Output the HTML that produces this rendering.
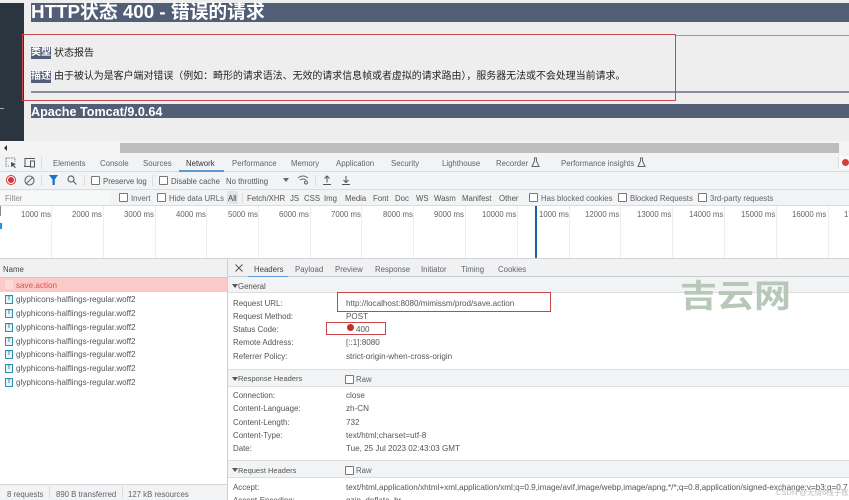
<!DOCTYPE html>
<html lang="zh-CN"><head><meta charset="utf-8"><title>HTTP状态 400</title>
<style>
html,body{margin:0;padding:0;background:#fff}
#p{position:relative;width:849px;height:500px;overflow:hidden;background:#fff;font:8.2px "Liberation Sans","Noto Sans CJK SC",sans-serif;color:#555;filter:blur(.35px)}
#p div,#p span.a{position:absolute;white-space:nowrap}
.r{background:#f1f3f4}
.t{line-height:12px;color:#606368;font-size:7.8px;margin-top:1px}
.k{line-height:12px;color:#555;left:233px;font-size:7.9px;margin-top:1px}
.v{line-height:12px;color:#555;left:346px;font-size:8.1px;margin-top:1px}
.cb{width:7px;height:7px;border:1px solid #777;border-radius:1px;background:#fff}
.f{left:16px;line-height:12px;color:#555;font-size:8.1px;margin-top:1px}
.ic{left:5px;width:6px;height:7px;border:1px solid #2b8fb0;background:#e8f4f8;color:#2b8fb0;font-size:6px;line-height:7px;text-align:center;font-weight:bold;margin-top:1px}
.rb{border:1.5px solid #c8454c;box-sizing:border-box}
.ln{background:#dcdcdc}
.h{font-size:7.5px!important}
</style></head><body><div id="p">
<!-- page area -->
<div style="left:0;top:0;width:849px;height:143px;background:#eeeeee"></div>
<div style="left:0;top:3px;width:24px;height:138px;background:#2b3540"></div>
<div style="left:0;top:108px;width:4px;height:1px;background:#aaa"></div>
<div style="left:31px;top:3px;width:818px;height:19px;background:#525d76"></div>
<div style="left:31px;top:0;line-height:23px;font-size:18.8px;font-weight:bold;color:#fff">HTTP状态 400 - 错误的请求</div>
<div style="left:675px;top:35px;width:174px;height:1px;background:#999"></div>
<div style="left:31px;top:91px;width:818px;height:2px;background:#8a8d9a"></div>
<div style="left:31px;top:47px;width:20px;height:12px;background:#525d76;color:#fff;font-size:10px;font-weight:bold;line-height:12px">类型</div>
<div style="left:54px;top:47px;line-height:13px;font-size:10px;color:#222">状态报告</div>
<div style="left:31px;top:71px;width:20px;height:12px;background:#525d76;color:#fff;font-size:10px;font-weight:bold;line-height:12px">描述</div>
<div style="left:54px;top:70px;line-height:13px;font-size:9.95px;color:#222">由于被认为是客户端对错误（例如：畸形的请求语法、无效的请求信息帧或者虚拟的请求路由），服务器无法或不会处理当前请求。</div>
<div style="left:31px;top:104px;width:818px;height:14px;background:#525d76"></div>
<div style="left:31px;top:105px;line-height:15px;font-size:12.6px;font-weight:bold;color:#fff">Apache Tomcat/9.0.64</div>
<div class="rb" style="left:22px;top:34px;width:654px;height:67px"></div>
<!-- scrollbar -->
<div style="left:0;top:141px;width:849px;height:13px;background:#f4f4f4"></div>
<div style="left:120px;top:143px;width:719px;height:10px;background:#bdbdbd"></div>
<div style="left:4px;top:145px;width:0;height:0;border:3px solid transparent;border-right:3px solid #333;border-left:0"></div>
<!-- tabs -->
<div class="r" style="left:0;top:154px;width:849px;height:18px"></div>
<div class="ln" style="left:0;top:171px;width:849px;height:1px"></div>
<svg style="position:absolute;left:5px;top:157px" width="30" height="12" viewBox="0 0 30 12" fill="none"><path d="M1 1h9v4M1 1v8h3" stroke="#777" stroke-dasharray="1.5 1"/><path d="M6 5l5 2-2 1 2 3-1 0-2-2-2 1z" fill="#555"/><path d="M20 9V1.5h10M19 9.500h6" stroke="#555"/><rect x="25.500" y="4" width="4" height="6" stroke="#555"/></svg>
<div style="left:41px;top:156px;width:1px;height:13px;background:#ddd"></div>
<div class="t" style="left:53px;top:157px">Elements</div>
<div class="t" style="left:100px;top:157px">Console</div>
<div class="t" style="left:143px;top:157px">Sources</div>
<div class="t" style="left:186px;top:157px;color:#333">Network</div>
<div style="left:179px;top:170px;width:45px;height:2px;background:#5b9bd5"></div>
<div class="t" style="left:232px;top:157px">Performance</div>
<div class="t" style="left:291px;top:157px">Memory</div>
<div class="t" style="left:336px;top:157px">Application</div>
<div class="t" style="left:391px;top:157px">Security</div>
<div class="t" style="left:442px;top:157px">Lighthouse</div>
<div class="t" style="left:496px;top:157px">Recorder</div>
<div class="t" style="left:561px;top:157px">Performance insights</div>
<svg style="position:absolute;left:531px;top:157px" width="9" height="11" viewBox="0 0 9 11" fill="none" stroke="#666"><path d="M3 1h3M3.500 1v3L1 9.500h7L5.500 4V1"/></svg>
<svg style="position:absolute;left:637px;top:157px" width="9" height="11" viewBox="0 0 9 11" fill="none" stroke="#666"><path d="M3 1h3M3.500 1v3L1 9.500h7L5.500 4V1"/></svg>
<div style="left:838px;top:156px;width:11px;height:13px;background:#fafafa;border-left:1px solid #ddd"></div>
<div style="left:842px;top:159px;width:7px;height:7px;border-radius:50%;background:#d93a3a"></div>
<!-- toolbar -->
<div class="r" style="left:0;top:172px;width:849px;height:17px"></div>
<div class="ln" style="left:0;top:189px;width:849px;height:1px"></div>
<div style="left:6px;top:175px;width:8px;height:8px;border:1px solid #d8333a;border-radius:50%;background:#fff"></div>
<div style="left:8px;top:177px;width:6px;height:6px;border-radius:50%;background:#d8333a"></div>
<svg style="position:absolute;left:24px;top:175px" width="11" height="11" viewBox="0 0 11 11" fill="none" stroke="#666" stroke-width="1.100"><circle cx="5.500" cy="5.500" r="4.500"/><path d="M2.500 8.500l6-6"/></svg>
<div style="left:41px;top:175px;width:1px;height:11px;background:#ddd"></div>
<svg style="position:absolute;left:49px;top:175px" width="10" height="10" viewBox="0 0 10 10"><path d="M0 0h9L5.800 4.500V10H3.500V4.500z" fill="#1a73c8"/></svg>
<svg style="position:absolute;left:67px;top:175px" width="10" height="10" viewBox="0 0 10 10" fill="none" stroke="#666" stroke-width="1.200"><circle cx="4" cy="4" r="3"/><path d="M6 6l3.500 3.500"/></svg>
<div style="left:84px;top:175px;width:1px;height:11px;background:#ddd"></div>
<div class="cb" style="left:91px;top:176px"></div>
<div class="t" style="left:103px;top:175px;color:#555">Preserve log</div>
<div style="left:152px;top:175px;width:1px;height:11px;background:#ddd"></div>
<div class="cb" style="left:159px;top:176px"></div>
<div class="t" style="left:171px;top:175px;color:#555">Disable cache</div>
<div class="t" style="left:226px;top:175px;color:#555">No throttling</div>
<div style="left:283px;top:178px;width:0;height:0;border:3px solid transparent;border-top:4px solid #666;border-bottom:0"></div>
<svg style="position:absolute;left:297px;top:175px" width="12" height="10" viewBox="0 0 12 10" fill="none" stroke="#666"><path d="M1 3q5-4 10 0M3 5q3-2 6 0"/><circle cx="9" cy="7.500" r="1.500"/></svg>
<div style="left:315px;top:175px;width:1px;height:11px;background:#ddd"></div>
<svg style="position:absolute;left:322px;top:175px" width="10" height="10" viewBox="0 0 10 10" fill="none" stroke="#555"><path d="M5 7.500V1M2.500 3.500L5 1l2.500 2.500M1 9.500h8"/></svg>
<svg style="position:absolute;left:341px;top:175px" width="10" height="10" viewBox="0 0 10 10" fill="none" stroke="#555"><path d="M5 1v6.500M2.500 5L5 7.500 7.500 5M1 9.500h8"/></svg>
<!-- filter -->
<div class="r" style="left:0;top:190px;width:849px;height:15px"></div>
<div style="left:0;top:191px;width:110px;height:14px;background:#f7f8f8"></div>
<div class="t" style="left:5px;top:192px;color:#888">Filter</div>
<div class="cb" style="left:119px;top:193px"></div><div class="t" style="left:131px;top:192px">Invert</div>
<div class="cb" style="left:157px;top:193px"></div><div class="t" style="left:169px;top:192px">Hide data URLs</div>
<div style="left:227px;top:191px;width:11px;height:13px;background:#e2e3e5"></div>
<div class="t" style="left:228px;top:192px;color:#444">All</div>
<div style="left:242px;top:193px;width:1px;height:10px;background:#ddd"></div>
<div class="t" style="left:247px;top:192px;color:#555">Fetch/XHR</div>
<div class="t" style="left:290px;top:192px;color:#555">JS</div>
<div class="t" style="left:304px;top:192px;color:#555">CSS</div>
<div class="t" style="left:324px;top:192px;color:#555">Img</div>
<div class="t" style="left:345px;top:192px;color:#555">Media</div>
<div class="t" style="left:373px;top:192px;color:#555">Font</div>
<div class="t" style="left:395px;top:192px;color:#555">Doc</div>
<div class="t" style="left:416px;top:192px;color:#555">WS</div>
<div class="t" style="left:434px;top:192px;color:#555">Wasm</div>
<div class="t" style="left:462px;top:192px;color:#555">Manifest</div>
<div class="t" style="left:499px;top:192px;color:#555">Other</div>
<div class="cb" style="left:529px;top:193px"></div><div class="t" style="left:541px;top:192px">Has blocked cookies</div>
<div class="cb" style="left:618px;top:193px"></div><div class="t" style="left:630px;top:192px">Blocked Requests</div>
<div class="cb" style="left:698px;top:193px"></div><div class="t" style="left:710px;top:192px">3rd-party requests</div>
<div class="ln" style="left:0;top:205px;width:849px;height:1px"></div>
<!-- timeline -->
<div class="t" style="left:21px;top:208px">1000 ms</div>
<div class="t" style="left:72px;top:208px">2000 ms</div>
<div class="t" style="left:124px;top:208px">3000 ms</div>
<div class="t" style="left:176px;top:208px">4000 ms</div>
<div class="t" style="left:228px;top:208px">5000 ms</div>
<div class="t" style="left:279px;top:208px">6000 ms</div>
<div class="t" style="left:331px;top:208px">7000 ms</div>
<div class="t" style="left:383px;top:208px">8000 ms</div>
<div class="t" style="left:434px;top:208px">9000 ms</div>
<div class="t" style="left:482px;top:208px">10000 ms</div>
<div class="t" style="left:539px;top:208px">1000 ms</div>
<div class="t" style="left:585px;top:208px">12000 ms</div>
<div class="t" style="left:637px;top:208px">13000 ms</div>
<div class="t" style="left:689px;top:208px">14000 ms</div>
<div class="t" style="left:741px;top:208px">15000 ms</div>
<div class="t" style="left:792px;top:208px">16000 ms</div>
<div class="t" style="left:844px;top:208px">17000 ms</div>
<div style="left:51px;top:206px;width:1px;height:52px;background:#eee;box-shadow:52px 0 #eee,104px 0 #eee,155px 0 #eee,207px 0 #eee,259px 0 #eee,310px 0 #eee,362px 0 #eee,414px 0 #eee,466px 0 #eee,518px 0 #eee,569px 0 #eee,621px 0 #eee,673px 0 #eee,725px 0 #eee,777px 0 #eee"></div>
<div style="left:535px;top:206px;width:1.500px;height:53px;background:#1f5f9e"></div>
<div style="left:0;top:206px;width:1px;height:10px;background:#888"></div>
<div style="left:0;top:223px;width:2px;height:6px;background:#2a8fd8"></div>
<!-- split -->
<div class="r" style="left:0;top:259px;width:849px;height:18px;background:#f0f1f3"></div>
<div style="left:0;top:258px;width:849px;height:1px;background:#d4d4d4"></div>
<div style="left:227px;top:259px;width:1px;height:241px;background:#cfcfcf"></div>
<div style="left:0;top:277px;width:227px;height:1px;background:#ccc"></div>
<div style="left:228px;top:276px;width:621px;height:1px;background:#ccc"></div>
<div class="t" style="left:3px;top:263px;color:#444">Name</div>
<svg style="position:absolute;left:235px;top:264px" width="8" height="8" viewBox="0 0 8 8" stroke="#555" stroke-width="1"><path d="M.500.500l7 7M7.500.500l-7 7"/></svg>
<div style="left:248px;top:276px;width:40px;height:1px;background:#5b9bd5"></div>
<div class="t" style="left:254px;top:263px;color:#444">Headers</div>
<div class="t" style="left:295px;top:263px">Payload</div>
<div class="t" style="left:335px;top:263px">Preview</div>
<div class="t" style="left:375px;top:263px">Response</div>
<div class="t" style="left:421px;top:263px">Initiator</div>
<div class="t" style="left:461px;top:263px">Timing</div>
<div class="t" style="left:498px;top:263px">Cookies</div>
<!-- request list -->
<div style="left:0;top:278px;width:227px;height:14px;background:#fcc9c9"></div>
<div style="left:5px;top:280px;width:8px;height:9px;background:#fddada"></div>
<div class="f" style="top:279px;color:#d9534f">save.action</div>
<div class="ic" style="top:294px">T</div><div class="f" style="top:293px">glyphicons-halflings-regular.woff2</div>
<div class="ic" style="top:308px">T</div><div class="f" style="top:307px">glyphicons-halflings-regular.woff2</div>
<div class="ic" style="top:322px">T</div><div class="f" style="top:321px">glyphicons-halflings-regular.woff2</div>
<div class="ic" style="top:336px">T</div><div class="f" style="top:335px">glyphicons-halflings-regular.woff2</div>
<div class="ic" style="top:349px">T</div><div class="f" style="top:348px">glyphicons-halflings-regular.woff2</div>
<div class="ic" style="top:363px">T</div><div class="f" style="top:362px">glyphicons-halflings-regular.woff2</div>
<div class="ic" style="top:377px">T</div><div class="f" style="top:376px">glyphicons-halflings-regular.woff2</div>
<!-- status bar -->
<div class="r" style="left:0;top:485px;width:227px;height:15px"></div>
<div style="left:0;top:484px;width:227px;height:1px;background:#d4d4d4"></div>
<div class="t" style="left:7px;top:488px">8 requests</div>
<div style="left:49px;top:486px;width:1px;height:12px;background:#ddd"></div>
<div class="t" style="left:56px;top:488px">890 B transferred</div>
<div style="left:122px;top:486px;width:1px;height:12px;background:#ddd"></div>
<div class="t" style="left:128px;top:488px">127 kB resources</div>
<!-- General -->
<div class="r" style="left:228px;top:277px;width:621px;height:15px"></div>
<div style="left:228px;top:292px;width:621px;height:1px;background:#ddd"></div>
<div style="left:232px;top:284px;width:0;height:0;border:3px solid transparent;border-top:4px solid #555;border-bottom:0"></div>
<div class="t" style="left:238px;top:280px;color:#555">General</div>
<div class="k" style="top:297px">Request URL:</div><div class="v" style="top:297px">http://localhost:8080/mimissm/prod/save.action</div>
<div class="k" style="top:310px">Request Method:</div><div class="v" style="top:310px">POST</div>
<div class="k" style="top:323px">Status Code:</div>
<div style="left:347px;top:324px;width:7px;height:7px;border-radius:50%;background:#cc2a24"></div>
<div class="v" style="top:323px;left:356px">400</div>
<div class="k" style="top:336px">Remote Address:</div><div class="v" style="top:336px">[::1]:8080</div>
<div class="k" style="top:350px">Referrer Policy:</div><div class="v" style="top:350px">strict-origin-when-cross-origin</div>
<div class="rb" style="left:337px;top:292px;width:214px;height:20px"></div>
<div class="rb" style="left:326px;top:322px;width:60px;height:13px"></div>
<!-- Response Headers -->
<div class="r" style="left:228px;top:369px;width:621px;height:17px"></div>
<div style="left:228px;top:369px;width:621px;height:1px;background:#ddd"></div>
<div style="left:228px;top:386px;width:621px;height:1px;background:#ddd"></div>
<div style="left:232px;top:377px;width:0;height:0;border:3px solid transparent;border-top:4px solid #555;border-bottom:0"></div>
<div class="t h" style="left:238px;top:372px;color:#555">Response Headers</div>
<div class="cb" style="left:345px;top:375px"></div><div class="t" style="left:356px;top:373px">Raw</div>
<div class="k" style="top:389px">Connection:</div><div class="v" style="top:389px">close</div>
<div class="k" style="top:402px">Content-Language:</div><div class="v" style="top:402px">zh-CN</div>
<div class="k" style="top:416px">Content-Length:</div><div class="v" style="top:416px">732</div>
<div class="k" style="top:429px">Content-Type:</div><div class="v" style="top:429px">text/html;charset=utf-8</div>
<div class="k" style="top:442px">Date:</div><div class="v" style="top:442px">Tue, 25 Jul 2023 02:43:03 GMT</div>
<!-- Request Headers -->
<div class="r" style="left:228px;top:461px;width:621px;height:17px"></div>
<div style="left:228px;top:460px;width:621px;height:1px;background:#ddd"></div>
<div style="left:228px;top:477px;width:621px;height:1px;background:#ddd"></div>
<div style="left:232px;top:468px;width:0;height:0;border:3px solid transparent;border-top:4px solid #555;border-bottom:0"></div>
<div class="t h" style="left:238px;top:464px;color:#555">Request Headers</div>
<div class="cb" style="left:345px;top:466px"></div><div class="t" style="left:356px;top:464px">Raw</div>
<div class="k" style="top:481px">Accept:</div><div class="v" style="top:481px;font-size:8.15px">text/html,application/xhtml+xml,application/xml;q=0.9,image/avif,image/webp,image/apng,*/*;q=0.8,application/signed-exchange;v=b3;q=0.7</div>
<div class="k" style="top:494px">Accept-Encoding:</div><div class="v" style="top:494px">gzip, deflate, br</div>
<!-- watermarks -->
<div style="left:680px;top:275px;line-height:36px;font-family:'Noto Sans CJK SC',sans-serif;font-size:37px;font-weight:bold;color:#b7c8b9;transform:scaleY(.86);transform-origin:0 50%">吉云网</div>
<div style="left:776px;top:488px;line-height:10px;font-size:7.5px;color:#bbb">CSDN @无情6栈子账尔</div>
</div></body></html>
